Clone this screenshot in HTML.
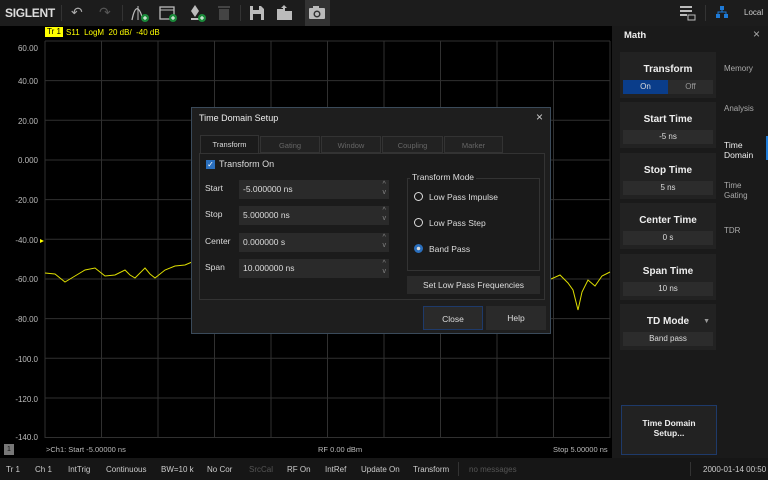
<!DOCTYPE html>
<html><head><style>
*{margin:0;padding:0;box-sizing:border-box}
body{width:768px;height:480px;background:#000;font-family:"Liberation Sans",sans-serif;color:#ddd;position:relative;overflow:hidden;font-size:9px}
.abs{position:absolute}
.tb{left:0;top:0;width:768px;height:26px;background:#1c1c1c}
.lbl{color:#bbb;font-size:8px;text-align:right;width:38px;left:0}
.rp{left:612px;top:26px;width:156px;height:432px;background:#1a1a1a}
.card{position:absolute;left:8px;width:96px;background:#222}
.card .t{color:#eee;font-weight:bold;font-size:10px;text-align:center;margin-top:12px}
.card .v{position:absolute;left:3px;right:3px;bottom:4px;height:14px;background:#2c2c2c;text-align:center;font-size:8px;line-height:14px;color:#ddd}
.side{position:absolute;left:112px;color:#aaa;font-size:8px}
.sb{left:0;top:458px;width:768px;height:22px;background:#161616;font-size:8px;color:#ccc}
.sb span{position:absolute;top:7px}
.dlg{left:191px;top:107px;width:360px;height:227px;background:#1e1e1e;border:1px solid #3a4a5a}
.tab{position:absolute;top:28px;height:17px;background:#222;border:1px solid #333;color:#666;font-size:7.5px;text-align:center;line-height:17px}
.fld{position:absolute;left:47px;width:150px;height:19px;background:#2a2a2a;font-size:8.5px;line-height:19px;padding-left:4px;color:#ddd}
.fl{position:absolute;left:13px;font-size:8.5px;color:#ddd}
.arr{position:absolute;right:3px;color:#888;font-size:7px;line-height:8px;top:1px}
.rad{position:absolute;left:222px;font-size:8.5px;color:#ddd}
.rad i{display:inline-block;width:9px;height:9px;border:1.5px solid #ddd;border-radius:50%;vertical-align:-1px;margin-right:6px}
.btn{position:absolute;background:#2a2a2a;text-align:center;font-size:8.5px;color:#ddd}
</style></head><body>
<div class="abs tb">
 <div class="abs" style="left:5px;top:6px;font-weight:bold;font-size:12px;color:#ddd;letter-spacing:-0.3px">SIGLENT</div>
 <div class="abs" style="left:61px;top:5px;width:1px;height:16px;background:#333"></div>
 <div class="abs" style="left:71px;top:4px;font-size:14px;color:#aaa">↶</div>
 <div class="abs" style="left:99px;top:4px;font-size:14px;color:#555">↷</div>
 <div class="abs" style="left:122px;top:5px;width:1px;height:16px;background:#333"></div>
 <svg class="abs" style="left:130px;top:3px" width="20" height="20"><path d="M2 17 C5 2 9 2 13 17" stroke="#bbb" fill="none" stroke-width="1.3"/><path d="M8 3v14" stroke="#bbb"/><circle cx="15" cy="15" r="4" fill="#1a8a3a"/><path d="M13 15h4M15 13v4" stroke="#fff"/></svg>
 <svg class="abs" style="left:158px;top:3px" width="20" height="20"><rect x="2" y="4" width="14" height="12" fill="none" stroke="#bbb" stroke-width="1.3"/><path d="M2 7h14" stroke="#bbb"/><circle cx="15" cy="15" r="4" fill="#1a8a3a"/><path d="M13 15h4M15 13v4" stroke="#fff"/></svg>
 <svg class="abs" style="left:188px;top:3px" width="20" height="20"><path d="M7 2l4 6-4 6-4-6z" fill="#bbb"/><rect x="3" y="15" width="8" height="2" fill="#bbb"/><circle cx="14" cy="15" r="4" fill="#1a8a3a"/><path d="M12 15h4M14 13v4" stroke="#fff"/></svg>
 <svg class="abs" style="left:215px;top:3px" width="20" height="20"><rect x="4" y="6" width="10" height="11" fill="#444"/><rect x="3" y="3" width="12" height="2" fill="#444"/></svg>
 <div class="abs" style="left:240px;top:5px;width:1px;height:16px;background:#333"></div>
 <svg class="abs" style="left:248px;top:4px" width="18" height="18"><path d="M2 2h11l3 3v11H2z" fill="#bbb"/><rect x="5" y="2" width="6" height="4" fill="#1c1c1c"/><rect x="5" y="10" width="8" height="6" fill="#1c1c1c"/></svg>
 <svg class="abs" style="left:276px;top:4px" width="18" height="18"><path d="M1 5h6l2 2h7v9H1z" fill="#bbb"/><path d="M8 1l3 3h-2v3h-2v-3h-2z" fill="#bbb"/></svg>
 <div class="abs" style="left:305px;top:0;width:25px;height:26px;background:#333"></div>
 <svg class="abs" style="left:308px;top:5px" width="18" height="16"><rect x="1" y="3" width="16" height="11" rx="1" fill="#bbb"/><rect x="5" y="1" width="6" height="3" fill="#bbb"/><circle cx="9" cy="9" r="3.5" fill="#333"/><circle cx="9" cy="9" r="2" fill="#bbb"/></svg>
 <svg class="abs" style="left:679px;top:5px" width="18" height="16"><path d="M1 2h12M1 6h12M1 10h7" stroke="#bbb" stroke-width="2"/><rect x="9" y="10" width="7" height="5" fill="none" stroke="#bbb"/></svg>
 <div class="abs" style="left:705px;top:5px;width:1px;height:16px;background:#333"></div>
 <svg class="abs" style="left:715px;top:5px" width="14" height="14"><rect x="5" y="1" width="4" height="4" fill="#1e7ad6"/><rect x="1" y="9" width="4" height="4" fill="#1e7ad6"/><rect x="9" y="9" width="4" height="4" fill="#1e7ad6"/><path d="M7 5v2M3 9V7h8v2" stroke="#1e7ad6" fill="none"/></svg>
 <div class="abs" style="left:744px;top:8px;font-size:8px;color:#ccc">Local</div>
</div>
<div class="abs" style="left:45px;top:27px;background:#ff0;color:#000;font-size:8px;padding:0 2px;height:10px;line-height:10px">Tr 1</div>
<div class="abs" style="left:66px;top:28px;color:#ff0;font-size:8px">S11&nbsp; LogM&nbsp; 20 dB/&nbsp; -40 dB</div>
<svg class="abs" style="left:0;top:0" width="612" height="458">
 <g stroke="#303030" stroke-width="1">
  <path d="M45 41V438M101.5 41V438M158 41V438M214.5 41V438M271 41V438M327.5 41V438M384 41V438M440.5 41V438M497 41V438M553.5 41V438M610 41V438"/>
  <path d="M45 41H610M45 80.6H610M45 120.2H610M45 160H610M45 199.6H610M45 239.2H610M45 279H610M45 318.6H610M45 358.2H610M45 398H610M45 437.5H610"/>
 </g>
 <path d="M40 239l4 2-4 2z" fill="#ff0"/>
 <path d="M45 273 L55 274 L60 278 L65 282 L70 279 L75 276 L85 270 L95 268 L100 272 L105 276 L115 275 L125 270 L130 275 L135 278 L145 268 L150 274 L155 278 L165 270 L175 266 L185 265 L192 262" stroke="#dd0" fill="none" stroke-width="1"/>
 <path d="M551 279 L560 275 L568 283 L573 290 L578 310 L582 292 L588 280 L595 286 L602 276 L610 272" stroke="#dd0" fill="none" stroke-width="1"/>
</svg>
<div class="abs lbl" style="top:44px">60.00</div>
<div class="abs lbl" style="top:77px">40.00</div>
<div class="abs lbl" style="top:117px">20.00</div>
<div class="abs lbl" style="top:156px">0.000</div>
<div class="abs lbl" style="top:196px">-20.00</div>
<div class="abs lbl" style="top:236px">-40.00</div>
<div class="abs lbl" style="top:275px">-60.00</div>
<div class="abs lbl" style="top:315px">-80.00</div>
<div class="abs lbl" style="top:355px">-100.0</div>
<div class="abs lbl" style="top:395px">-120.0</div>
<div class="abs lbl" style="top:433px">-140.0</div>
<div class="abs" style="left:4px;top:444px;width:10px;height:11px;background:#777;color:#111;font-size:7px;text-align:center;line-height:11px">1</div>
<div class="abs" style="left:46px;top:445px;font-size:7.5px;color:#bbb">&gt;Ch1: Start -5.00000 ns</div>
<div class="abs" style="left:318px;top:445px;font-size:7.5px;color:#bbb">RF 0.00 dBm</div>
<div class="abs" style="left:553px;top:445px;font-size:7.5px;color:#bbb">Stop 5.00000 ns</div>

<div class="abs rp">
 <div class="abs" style="left:12px;top:4px;font-weight:bold;font-size:9.5px;color:#eee">Math</div>
 <div class="abs" style="left:141px;top:1px;font-size:12px;color:#aaa">×</div>
 <div class="card" style="top:26px;height:46px"><div class="t">Transform</div>
  <div class="abs" style="left:3px;bottom:4px;width:45px;height:14px;background:#0a3d8a;text-align:center;font-size:8px;line-height:14px">On</div>
  <div class="abs" style="left:48px;bottom:4px;width:45px;height:14px;background:#2c2c2c;color:#999;text-align:center;font-size:8px;line-height:14px">Off</div></div>
 <div class="card" style="top:76px;height:46px"><div class="t">Start Time</div><div class="v">-5 ns</div></div>
 <div class="card" style="top:127px;height:46px"><div class="t">Stop Time</div><div class="v">5 ns</div></div>
 <div class="card" style="top:177px;height:46px"><div class="t">Center Time</div><div class="v">0 s</div></div>
 <div class="card" style="top:228px;height:46px"><div class="t">Span Time</div><div class="v">10 ns</div></div>
 <div class="card" style="top:278px;height:46px"><div class="t">TD Mode</div><div class="abs" style="right:6px;top:14px;font-size:7px;color:#999">▼</div><div class="v">Band pass</div></div>
 <div class="side" style="top:38px">Memory</div>
 <div class="side" style="top:78px">Analysis</div>
 <div class="side" style="top:114px;color:#eee;font-size:8.5px;line-height:10px">Time<br>Domain</div>
 <div class="abs" style="left:154px;top:110px;width:2px;height:24px;background:#1e7ad6"></div>
 <div class="side" style="top:155px;line-height:10px">Time<br>Gating</div>
 <div class="side" style="top:200px">TDR</div>
 <div class="abs" style="left:9px;top:379px;width:96px;height:50px;background:#222;border:1px solid #1e3a6a;text-align:center;font-weight:bold;font-size:8.5px;color:#eee;padding-top:12px;line-height:10px">Time Domain<br>Setup...</div>
</div>

<div class="abs sb">
 <span style="left:6px">Tr 1</span><span style="left:35px">Ch 1</span><span style="left:68px">IntTrig</span><span style="left:106px">Continuous</span><span style="left:161px">BW=10 k</span><span style="left:207px">No Cor</span><span style="left:249px;color:#555">SrcCal</span><span style="left:287px">RF On</span><span style="left:325px">IntRef</span><span style="left:361px">Update On</span><span style="left:413px">Transform</span>
 <span style="left:458px;top:4px;width:1px;height:14px;background:#333"></span>
 <span style="left:469px;color:#555">no messages</span>
 <span style="left:690px;top:4px;width:1px;height:14px;background:#333"></span>
 <span style="left:703px">2000-01-14 00:50</span>
</div>

<div class="abs dlg">
 <div class="abs" style="left:7px;top:5px;font-size:9px;color:#eee">Time Domain Setup</div>
 <div class="abs" style="left:344px;top:2px;font-size:12px;color:#ccc">×</div>
 <div class="abs" style="left:7px;top:45px;width:346px;height:147px;border:1px solid #333;background:#1b1b1b"></div>
 <div class="tab" style="left:8px;width:59px;background:#1b1b1b;color:#ddd;border-bottom:none;height:18px;top:27px">Transform</div>
 <div class="tab" style="left:68px;width:60px">Gating</div>
 <div class="tab" style="left:129px;width:60px">Window</div>
 <div class="tab" style="left:190px;width:61px">Coupling</div>
 <div class="tab" style="left:252px;width:59px">Marker</div>
 <div class="abs" style="left:14px;top:52px;width:9px;height:9px;background:#2a6fbd;color:#fff;font-size:8px;line-height:9px;text-align:center">✓</div>
 <div class="abs" style="left:27px;top:51px;font-size:9px;color:#ddd">Transform On</div>
 <div class="fl" style="top:75px">Start</div><div class="fld" style="top:72px">-5.000000 ns<div class="arr">^<br>v</div></div>
 <div class="fl" style="top:101px">Stop</div><div class="fld" style="top:98px">5.000000 ns<div class="arr">^<br>v</div></div>
 <div class="fl" style="top:128px">Center</div><div class="fld" style="top:125px">0.000000 s<div class="arr">^<br>v</div></div>
 <div class="fl" style="top:154px">Span</div><div class="fld" style="top:151px">10.000000 ns<div class="arr">^<br>v</div></div>
 <div class="abs" style="left:215px;top:70px;width:133px;height:93px;border:1px solid #333"></div>
 <div class="abs" style="left:218px;top:64px;background:#1b1b1b;padding:0 2px;font-size:8.5px;color:#ddd">Transform Mode</div>
 <div class="rad" style="top:84px"><i></i>Low Pass Impulse</div>
 <div class="rad" style="top:110px"><i></i>Low Pass Step</div>
 <div class="rad" style="top:136px"><i style="border-color:#2a6fbd;background:radial-gradient(#ddd 30%,#2a6fbd 40%)"></i>Band Pass</div>
 <div class="btn" style="left:215px;top:168px;width:133px;height:18px;line-height:18px">Set Low Pass Frequencies</div>
 <div class="btn" style="left:231px;top:198px;width:60px;height:24px;line-height:24px;border:1px solid #1e3a6a">Close</div>
 <div class="btn" style="left:294px;top:198px;width:60px;height:24px;line-height:24px">Help</div>
</div>
</body></html>
